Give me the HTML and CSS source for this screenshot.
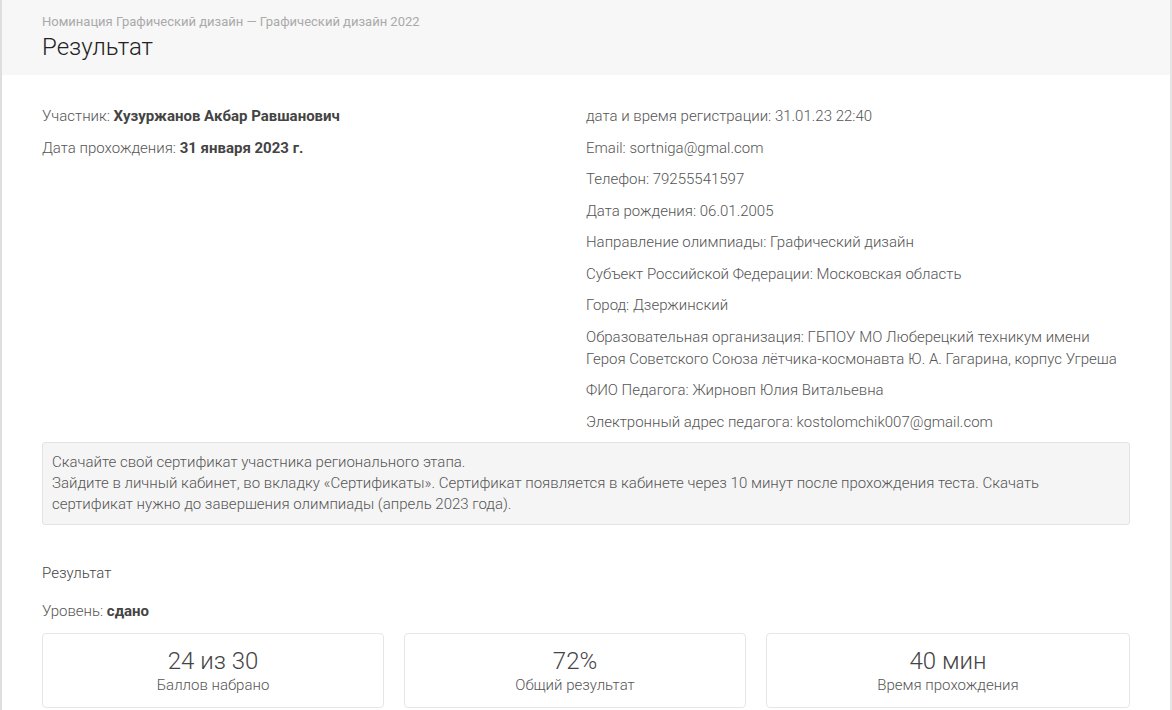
FILE: index.html
```html
<!DOCTYPE html>
<html lang="ru">
<head>
<meta charset="utf-8">
<title>Результат</title>
<link rel="stylesheet" href="styles.css">
</head>
<body>
<div class="page">
  <header class="page-header">
    <div class="crumb">Номинация Графический дизайн — Графический дизайн 2022</div>
    <h1 class="title">Результат</h1>
  </header>
  <main class="content">
    <section class="info">
      <div class="col">
        <p class="row">Участник: <b>Хузуржанов Акбар Равшанович</b></p>
        <p class="row">Дата прохождения: <b>31 января 2023 г.</b></p>
      </div>
      <div class="col">
        <p class="row">дата и время регистрации: 31.01.23 22:40</p>
        <p class="row">Email: sortniga@gmal.com</p>
        <p class="row">Телефон: 79255541597</p>
        <p class="row">Дата рождения: 06.01.2005</p>
        <p class="row">Направление олимпиады: Графический дизайн</p>
        <p class="row">Субъект Российской Федерации: Московская область</p>
        <p class="row">Город: Дзержинский</p>
        <p class="row">Образовательная организация: ГБПОУ МО Люберецкий техникум имени Героя Советского Союза лётчика-космонавта Ю. А. Гагарина, корпус Угреша</p>
        <p class="row">ФИО Педагога: Жирновп Юлия Витальевна</p>
        <p class="row">Электронный адрес педагога: kostolomchik007@gmail.com</p>
      </div>
    </section>
    <div class="well">
      Скачайте свой сертификат участника регионального этапа.<br>
      Зайдите в личный кабинет, во вкладку «Сертификаты». Сертификат появляется в кабинете через 10 минут после прохождения теста. Скачать сертификат нужно до завершения олимпиады (апрель 2023 года).
    </div>
    <h2 class="section-title">Результат</h2>
    <p class="level">Уровень: <b>сдано</b></p>
    <div class="stats">
      <div class="stat"><div class="stat-value">24 из 30</div><div class="stat-label">Баллов набрано</div></div>
      <div class="stat"><div class="stat-value">72%</div><div class="stat-label">Общий результат</div></div>
      <div class="stat"><div class="stat-value">40 мин</div><div class="stat-label">Время прохождения</div></div>
    </div>
  </main>
</div>
</body>
</html>
```

FILE: styles.css
```css
* { box-sizing: border-box; }
html, body { margin: 0; padding: 0; background: #fff; }
body {
  font-family: Roboto, "Liberation Sans", Arial, sans-serif;
  font-weight: 300;
  font-size: 15px;
  color: #555;
  height: 710px;
  overflow: hidden;
}
.page {
  border-left: 2px solid #dedede;
  border-right: 2px solid #e4e4e4;
  min-height: 710px;
}
.page-header {
  background: #f7f7f7;
  height: 75px;
  padding: 13px 40px 0;
}
.crumb {
  font-size: 13px;
  font-weight: 400;
  color: #aaa;
  line-height: 17px;
}
.title {
  margin: 2px 0 0;
  font-size: 24px;
  font-weight: 300;
  color: #222;
  line-height: 30px;
}
.content {
  padding: 30px 40px 0;
}
.info {
  display: grid;
  grid-template-columns: 1fr 1fr;
  column-gap: 0;
}
.col:first-child { padding-right: 20px; }
.row {
  margin: 0 0 9.5px;
  line-height: 22px;
  color: #555;
}
.row b { font-weight: 700; color: #444; }
.well {
  margin-top: 0;
  background: #f5f5f5;
  border: 1px solid #e3e3e3;
  border-radius: 3px;
  padding: 9px;
  line-height: 21px;
  color: #555;
}
.section-title {
  margin: 37px 0 0;
  font-size: 15px;
  font-weight: 300;
  color: #444;
  line-height: 22px;
}
.level {
  margin: 16px 0 0;
  line-height: 22px;
}
.level b { font-weight: 700; color: #444; }
.stats {
  margin-top: 11px;
  display: grid;
  grid-template-columns: 342px 342px 1fr;
  gap: 20px;
}
.stat {
  border: 1px solid #e6e6e6;
  border-radius: 4px;
  height: 75px;
  text-align: center;
  padding-top: 13px;
}
.stat-value {
  font-size: 24px;
  font-weight: 300;
  color: #444;
  line-height: 28px;
}
.stat-label {
  font-size: 15px;
  color: #555;
  line-height: 20px;
  font-weight: 300;
}
```
